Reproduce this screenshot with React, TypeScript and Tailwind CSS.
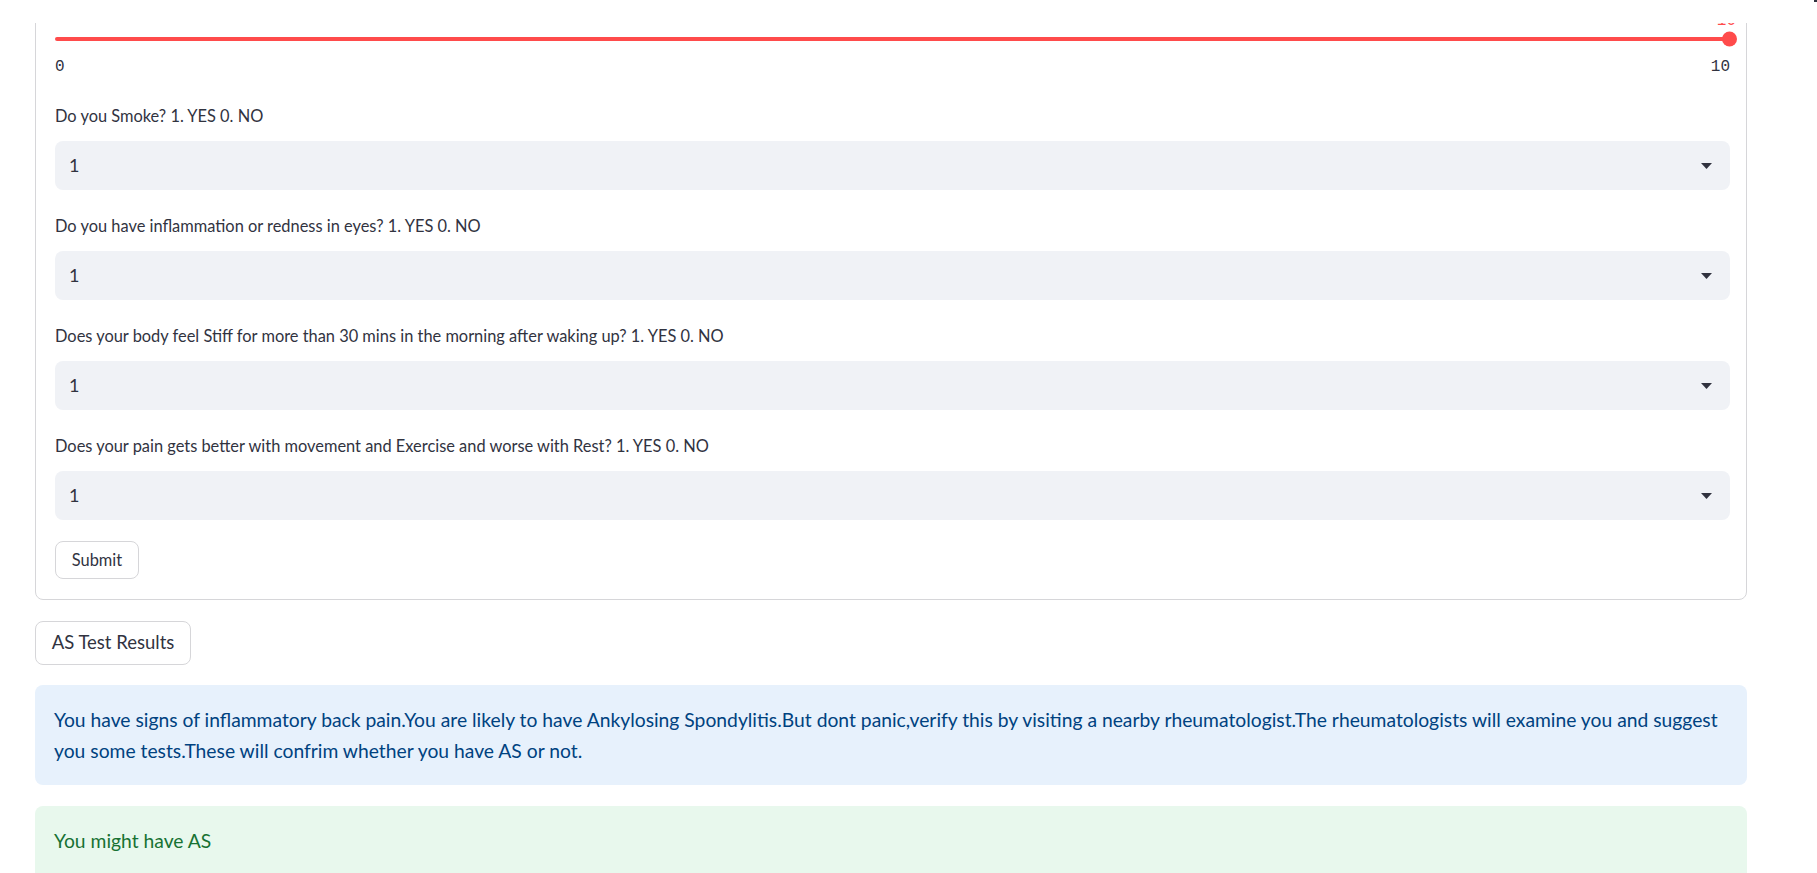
import React from "react";

// Select box with value and caret, like the streamlit selectbox
function Select({ label, value }: { label: string; value: string }) {
  return (
    <div className="flex flex-col">
      <label className="mt-[24px] text-[16.4px] leading-[24px] text-[#31333f]">{label}</label>
      <div className="mt-[13px] h-[49px] rounded-lg bg-[#f0f2f6] flex items-center justify-between pl-[14px] pr-[18px]">
        <span className="text-[18px] text-[#31333f]">{value}</span>
        <svg width="11" height="6" viewBox="0 0 11 6">
          <path d="M0 0 L11 0 L5.5 6 Z" fill="#31333f" />
        </svg>
      </div>
    </div>
  );
}

const questions = [
  "Do you Smoke? 1. YES 0. NO",
  "Do you have inflammation or redness in eyes? 1. YES 0. NO",
  "Does your body feel Stiff for more than 30 mins in the morning after waking up? 1. YES 0. NO",
  "Does your pain gets better with movement and Exercise and worse with Rest? 1. YES 0. NO",
];

export default function App() {
  return (
    <div className="relative h-[873px] overflow-hidden bg-white font-['Lato',sans-serif] text-[#31333f]">
      {/* header strip covering the scrolled page */}
      <div className="fixed top-0 inset-x-0 h-[23px] bg-white z-10">
        <span className="absolute right-0 top-0 w-[3px] h-[2px] bg-[#31333f]" />
      </div>

      <div className="pl-[35px] w-[1747px]">
        {/* form */}
        <div className="border border-[#d6d6d9] rounded-lg pl-[19px] pr-[16px] pb-[20px]">
          {/* slider */}
          <div className="relative pt-[36px] pb-[3px]">
            <span className="absolute right-0 top-[10px] font-['Liberation_Mono',monospace] text-[16px] leading-[20px] text-[#ff4b4b] translate-x-[6px]">
              10
            </span>
            <div className="relative h-[4px] rounded-full bg-[#ff4b4b]">
              <div className="absolute -right-[7px] top-1/2 -translate-y-1/2 w-[15px] h-[15px] rounded-full bg-[#ff4b4b]" />
            </div>
            <div className="mt-[16px] flex justify-between font-['Liberation_Mono',monospace] text-[16px] leading-[20px] text-[#31333f]">
              <span>0</span>
              <span>10</span>
            </div>
          </div>

          {questions.map((q) => (
            <Select key={q} label={q} value="1" />
          ))}

          <button className="mt-[21px] h-[38px] w-[84px] rounded-lg border border-[#d6d6d9] bg-white text-[16.4px] text-[#31333f]">
            Submit
          </button>
        </div>

        <button className="mt-[21px] h-[44px] w-[156px] rounded-lg border border-[#d6d6d9] bg-white text-[18.5px] text-[#31333f]">
          AS Test Results
        </button>

        <div className="mt-[20px] rounded-lg bg-[#e7f1fc] px-[19px] py-[19px] text-[19.3px] leading-[31px] text-[#004280]">
          You have signs of inflammatory back pain.You are likely to have Ankylosing Spondylitis.But dont panic,verify this by visiting a nearby rheumatologist.The rheumatologists will examine you and suggest you some tests.These will confrim whether you have AS or not.
        </div>

        <div className="mt-[21px] h-[120px] rounded-lg bg-[#e8f8ed] px-[19px] pt-[19px] text-[19.3px] leading-[31px] text-[#177233]">
          You might have AS
        </div>
      </div>
    </div>
  );
}
